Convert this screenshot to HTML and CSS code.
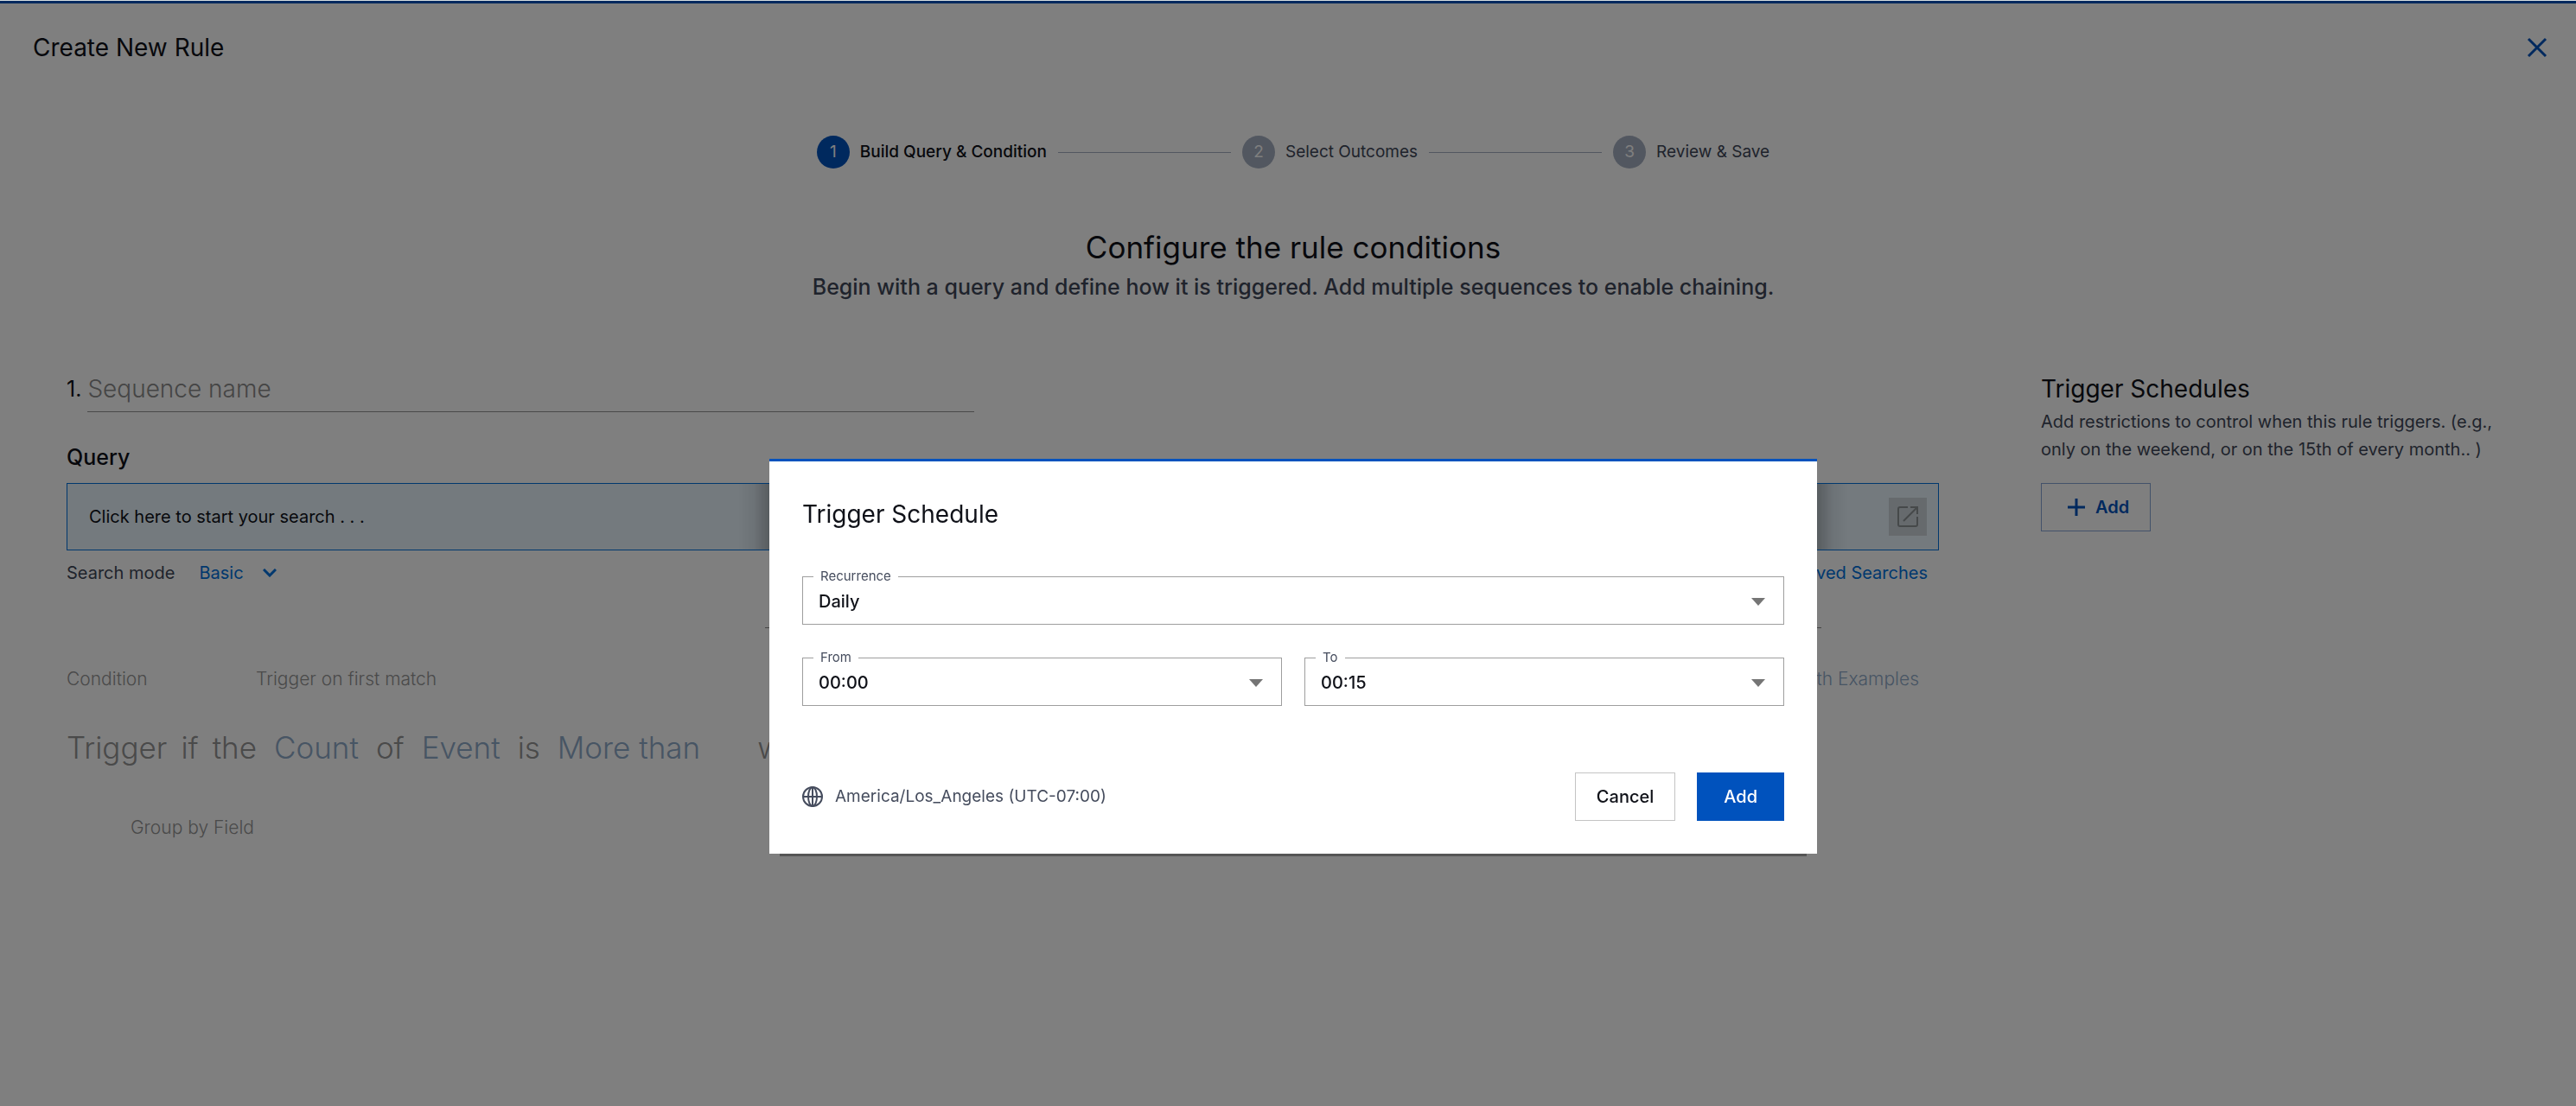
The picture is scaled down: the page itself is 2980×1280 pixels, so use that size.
FILE: index.html
```html
<!DOCTYPE html>
<html lang="en">
<head>
<meta charset="utf-8">
<title>Create New Rule</title>
<link rel="stylesheet" href="styles.css">
</head>
<body>
<div class="page">
  <header class="page-header">
    <h1 class="page-title">Create New Rule</h1>
    <button class="icon-button" type="button" aria-label="Close">
      <svg width="24" height="24" viewBox="0 0 24 24" fill="none" stroke="currentColor" stroke-width="3"><path d="M2 2 22 22M22 2 2 22"/></svg>
    </button>
  </header>

  <section class="intro">
    <ol class="stepper">
      <li class="step step-active"><span class="step-number">1</span><span>Build Query &amp; Condition</span></li>
      <li class="step-line"></li>
      <li class="step"><span class="step-number">2</span><span>Select Outcomes</span></li>
      <li class="step-line"></li>
      <li class="step"><span class="step-number">3</span><span>Review &amp; Save</span></li>
    </ol>
    <h2 class="intro-title">Configure the rule conditions</h2>
    <p class="intro-text">Begin with a query and define how it is triggered. Add multiple sequences to enable chaining.</p>
  </section>

  <div class="columns">
    <main class="sequence">
      <div class="sequence-name">
        <label for="sequence-name">1.</label>
        <input id="sequence-name" type="text" placeholder="Sequence name">
      </div>
      <h3 class="query-title">Query</h3>
      <div class="query-box">
        <span>Click here to start your search . . .</span>
        <button class="open-button" type="button" aria-label="Open search">
          <svg width="24" height="24" viewBox="0 0 24 24" fill="none" stroke="currentColor" stroke-width="2"><path d="M12 1H3Q1 1 1 3V21Q1 23 3 23H21Q23 23 23 21V12M15 1H23V9M22 2 7 17"/></svg>
        </button>
      </div>
      <div class="query-options">
        <span>Search mode</span>
        <button class="mode-button" type="button">Basic
          <svg width="16" height="10" viewBox="0 0 16 10" fill="none" stroke="currentColor" stroke-width="3"><path d="M1 1 8 8 15 1"/></svg>
        </button>
        <a class="saved-link" href="#saved">Saved Searches</a>
      </div>
      <hr class="divider">
      <div class="condition-row">
        <span class="condition-label">Condition</span>
        <span>Trigger on first match</span>
        <a class="examples-link" href="#examples">Start with Examples</a>
      </div>
      <p class="sentence">
        <span>Trigger</span><span>if</span><span>the</span>
        <a class="token" href="#count">Count</a><span>of</span>
        <a class="token" href="#event">Event</a><span>is</span>
        <a class="token token-last" href="#operator">More than</a><span>within</span>
      </p>
      <p class="group-by">Group by Field</p>
    </main>

    <aside class="schedules">
      <h3 class="schedules-title">Trigger Schedules</h3>
      <p class="schedules-text">Add restrictions to control when this rule triggers. (e.g., only on the weekend, or on the 15th of every month.. )</p>
      <button class="button button-outline" type="button">
        <svg width="20" height="20" viewBox="0 0 20 20" fill="none" stroke="currentColor" stroke-width="3"><path d="M10 0V20M0 10H20"/></svg>
        Add
      </button>
    </aside>
  </div>
</div>

<div class="overlay">
  <form class="dialog" role="dialog" aria-labelledby="dialog-title">
    <h2 class="dialog-title" id="dialog-title">Trigger Schedule</h2>
    <fieldset class="field">
      <legend><label for="recurrence">Recurrence</label></legend>
      <select id="recurrence"><option>Daily</option></select>
      <svg class="arrow" width="16" height="9" viewBox="0 0 16 9"><path d="M0 0H16L8 9Z"/></svg>
    </fieldset>
    <div class="time-range">
      <fieldset class="field">
        <legend><label for="from">From</label></legend>
        <select id="from"><option>00:00</option></select>
        <svg class="arrow" width="16" height="9" viewBox="0 0 16 9"><path d="M0 0H16L8 9Z"/></svg>
      </fieldset>
      <fieldset class="field">
        <legend><label for="to">To</label></legend>
        <select id="to"><option>00:15</option></select>
        <svg class="arrow" width="16" height="9" viewBox="0 0 16 9"><path d="M0 0H16L8 9Z"/></svg>
      </fieldset>
    </div>
    <footer class="dialog-footer">
      <svg width="24" height="24" viewBox="0 0 24 24" fill="none" stroke="currentColor" stroke-width="2"><circle cx="12" cy="12" r="11"/><ellipse cx="12" cy="12" rx="5" ry="11"/><path d="M1 12H23M12 1V23"/></svg>
      <span class="timezone">America/Los_Angeles (UTC-07:00)</span>
      <button class="button" type="button">Cancel</button>
      <button class="button button-primary" type="submit">Add</button>
    </footer>
  </form>
</div>
</body>
</html>
```
FILE: styles.css
```css
* { box-sizing: border-box; }

body {
  margin: 0;
  background: #fff;
  color: #0f1118;
  font-family: Inter, "Liberation Sans", sans-serif;
  font-size: 20px;
  line-height: 32px;
}

h1, h2, h3, p, ol { margin: 0; padding: 0; font-weight: 400; }
button, input, select { font: inherit; color: inherit; }
button { padding: 0; border: 0; background: none; }
a { color: #0070dc; text-decoration: none; }
svg { display: block; flex: none; }

.page { border-top: 1px solid #d5dcdf; }

.page-header {
  display: flex;
  justify-content: space-between;
  align-items: center;
  height: 105px;
  padding: 0 33px 0 38px;
  border-top: 3px solid #0052bd;
}
.page-title { font-size: 28px; line-height: 36px; }
.icon-button { color: #0052bd; }

.intro { padding: 51px 0 0 12px; text-align: center; }

.stepper {
  display: flex;
  justify-content: center;
  align-items: center;
  gap: 13px;
  font-size: 19px;
  list-style: none;
}
.step { display: flex; align-items: center; gap: 12px; color: #3f4758; }
.step-active { color: #0f1118; font-weight: 500; }
.step-number {
  width: 38px;
  border-radius: 50%;
  background: #a5aec0;
  color: #fff;
  font-weight: 400;
  line-height: 38px;
  text-align: center;
}
.step-active .step-number { background: #0052bd; }
.step-line { width: 200px; border-top: 1px solid #a5aec0; }

.intro-title { margin-top: 68px; font-size: 35px; line-height: 46px; }
.intro-text { margin-top: 7px; color: #3f4758; font-size: 25px; font-weight: 500; line-height: 32px; }

.columns {
  display: grid;
  grid-template-columns: 1fr 542px;
  gap: 118px;
  padding: 83px 77px 0;
}

.sequence-name { display: flex; align-items: flex-start; gap: 7px; font-size: 25px; line-height: 38px; }
.sequence-name input {
  width: 1026px;
  height: 46px;
  padding: 0 0 8px;
  border: 0;
  border-bottom: 1px solid #949494;
  background: none;
  font-size: 28px;
  font-weight: 300;
}
.sequence-name input::placeholder { color: #8a8a8a; opacity: 1; }

.query-title { margin-top: 36px; font-size: 25px; font-weight: 500; line-height: 32px; }
.query-box {
  display: flex;
  justify-content: space-between;
  align-items: center;
  height: 78px;
  margin-top: 14px;
  padding: 0 13px 0 25px;
  border: 1px solid #0070dc;
  background: #e8f4fc;
}
.open-button {
  display: grid;
  place-items: center;
  width: 44px;
  height: 44px;
  background: #ccd5da;
  color: #8c9295;
}

.query-options { display: flex; gap: 28px; margin-top: 10px; padding-right: 13px; color: #3f4758; }
.mode-button { display: flex; align-items: center; gap: 22px; color: #0070dc; }
.saved-link { margin-left: auto; }

.divider { width: 1222px; margin: 47px 0 0 auto; border: 0; border-top: 1px solid #8a8a8a; }
.sequence .divider { margin-right: 136px; }

.condition-row { display: flex; margin-top: 43px; padding-right: 23px; color: #949494; font-size: 21px; font-weight: 300; }
.condition-row a, .token { color: #8faac8; }
.condition-label { width: 219px; }
.condition-row .examples-link { margin-left: auto; }

.sentence { display: flex; gap: 16px; margin-top: 39px; color: #949494; font-size: 35px; font-weight: 300; line-height: 48px; }
.token { margin: 0 4px; }
.token-last { margin-right: 50px; }
.group-by { margin-top: 53px; padding-left: 74px; color: #949494; font-size: 21px; font-weight: 300; }

.schedules { padding-top: 1px; }
.schedules-title { font-size: 28px; line-height: 36px; }
.schedules-text { margin-top: 4px; color: #3f4758; }

.button {
  display: inline-flex;
  justify-content: center;
  align-items: center;
  height: 56px;
  padding: 0 24px;
  border: 1px solid #c4c4c4;
  font-weight: 500;
}
.button-outline { gap: 12px; margin-top: 23px; padding: 0 24px 0 30px; border-color: #86a5d4; color: #0052bd; font-weight: 600; }
.button-primary { padding: 0 30px; border-color: #0052bd; background: #0052bd; color: #fff; }

.overlay {
  position: fixed;
  inset: 1px 0 0;
  display: flex;
  justify-content: center;
  align-items: center;
  padding: 238px 0 0 12px;
  background: rgba(0, 0, 0, 0.5);
}

.dialog {
  position: relative;
  width: 1212px;
  padding: 43px 38px 38px;
  border-top: 3px solid #0052bd;
  background: #fff;
  box-shadow: 0 15px 0 -12px #555;
}
/* Soft shade where the dialog covers the search box */
.dialog::before, .dialog::after {
  content: "";
  position: absolute;
  top: 26px;
  width: 36px;
  height: 76px;
}
.dialog::before { right: 100%; background: linear-gradient(to left, rgba(0, 0, 0, 0.24), rgba(0, 0, 0, 0.06) 50%, rgba(0, 0, 0, 0)); }
.dialog::after { left: 100%; background: linear-gradient(to right, rgba(0, 0, 0, 0.24), rgba(0, 0, 0, 0.06) 50%, rgba(0, 0, 0, 0)); }

.dialog-title { font-size: 28px; line-height: 36px; }

.field {
  position: relative;
  min-width: 0;
  height: 64px;
  margin: 46px 0 0;
  padding: 0;
  border: 1px solid #9e9e9e;
}
.field legend { margin-left: 12px; padding: 0 8px; color: #464d5e; font-size: 15px; line-height: 16px; }
.field label { display: block; }
.field select {
  display: block;
  width: 100%;
  height: 48px;
  padding: 0 18px 6px;
  border: 0;
  appearance: none;
  background: none;
  font-weight: 500;
}
.arrow { position: absolute; right: 21px; top: 17px; fill: #757575; pointer-events: none; }

.time-range { display: grid; grid-template-columns: 1fr 1fr; gap: 26px; }
.time-range .field { margin-top: 30px; }

.dialog-footer { display: flex; align-items: center; margin-top: 77px; color: #464d5e; }
.timezone { margin: 0 auto 0 14px; font-size: 19px; }
.dialog-footer .button { color: #0f1118; }
.dialog-footer .button-primary { margin-left: 25px; color: #fff; }
```
